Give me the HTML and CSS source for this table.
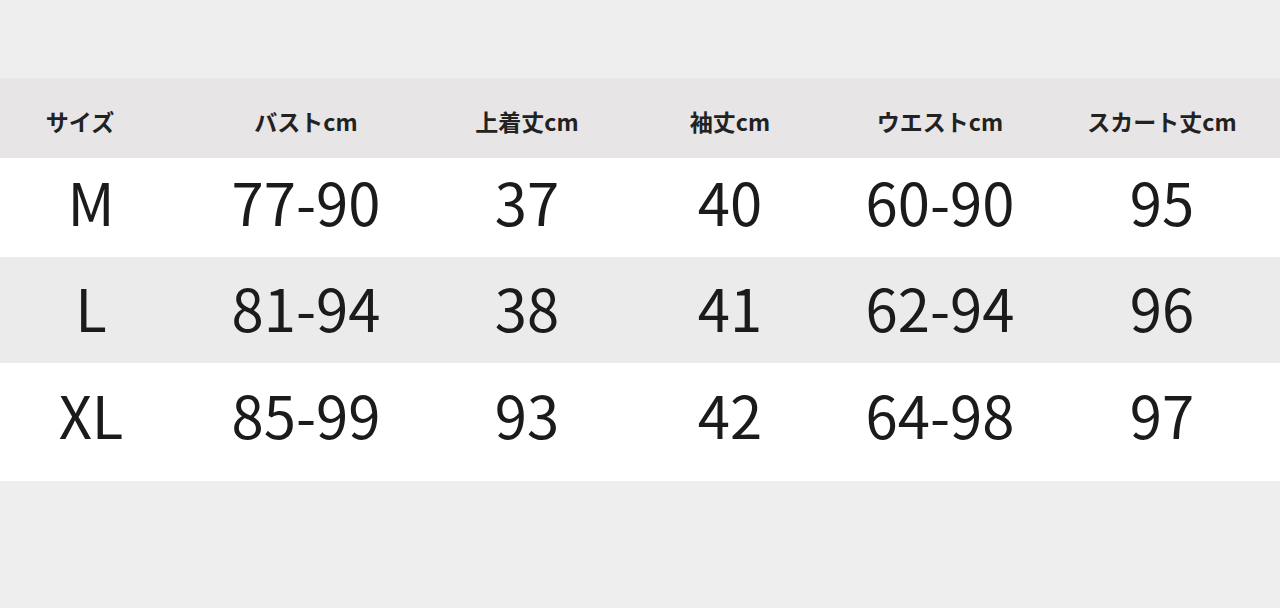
FILE: index.html
```html
<!DOCTYPE html>
<html lang="ja">
<head>
<meta charset="utf-8">
<title>サイズ表</title>
<link rel="stylesheet" href="styles.css">
</head>
<body>
<div class="page">
  <div class="table">
    <div class="row head">
      <div class="cell c1">サイズ</div>
      <div class="cell">バストcm</div>
      <div class="cell">上着丈cm</div>
      <div class="cell">袖丈cm</div>
      <div class="cell">ウエストcm</div>
      <div class="cell">スカート丈cm</div>
    </div>
    <div class="row data white r1">
      <div class="cell">M</div>
      <div class="cell">77-90</div>
      <div class="cell">37</div>
      <div class="cell">40</div>
      <div class="cell">60-90</div>
      <div class="cell">95</div>
    </div>
    <div class="row data gray r2">
      <div class="cell">L</div>
      <div class="cell">81-94</div>
      <div class="cell">38</div>
      <div class="cell">41</div>
      <div class="cell">62-94</div>
      <div class="cell">96</div>
    </div>
    <div class="row data white r3">
      <div class="cell">XL</div>
      <div class="cell">85-99</div>
      <div class="cell">93</div>
      <div class="cell">42</div>
      <div class="cell">64-98</div>
      <div class="cell">97</div>
    </div>
  </div>
</div>
</body>
</html>
```
FILE: styles.css
```css
html, body {
  margin: 0;
  padding: 0;
  background: #eeeeee;
}
.page {
  width: 1280px;
  height: 608px;
  padding-top: 78px;
  box-sizing: border-box;
  font-family: "Noto Sans CJK JP", "Noto Sans", sans-serif;
  color: #1b1b1b;
}
.table {
  display: flex;
  flex-direction: column;
}
.row {
  display: grid;
  grid-template-columns: 182px 248px 194px 212px 208px 236px;
  align-items: center;
  box-sizing: border-box;
}
.cell {
  text-align: center;
  white-space: nowrap;
}
.head {
  height: 80px;
  background: #e7e5e5;
  font-size: 23px;
  font-weight: 700;
  padding-top: 6px;
  color: #222;
}
.head .c1 {
  padding-right: 22px;
}
.data {
  font-size: 58px;
  font-weight: 400;
  line-height: 1;
}
.white { background: #ffffff; }
.gray { background: #ebebeb; }
.r1 { height: 99px; padding-bottom: 13px; }
.r2 { height: 106px; padding-bottom: 6px; }
.r3 { height: 118px; padding-bottom: 16px; }
```
